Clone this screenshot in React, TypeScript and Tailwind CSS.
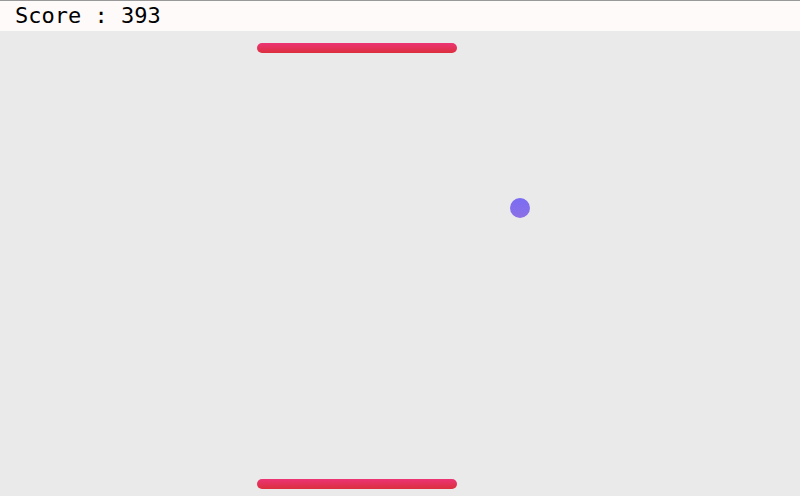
export default function App() {
  return (
    <div className="w-[800px] h-[496px] flex flex-col overflow-hidden bg-[#eaeaea]">
      <div className="h-[31px] shrink-0 border-t border-[#999999] bg-[#fffafa] flex items-center pl-[15px]">
        <span className="text-[22px] leading-none text-black" style={{ fontFamily: '"DejaVu Sans Mono", "Liberation Mono", monospace' }}>
          Score : 393
        </span>
      </div>
      <div className="relative flex-1">
        <div className="absolute left-[257px] top-[12px] w-[200px] h-[10px] rounded-full bg-gradient-to-b from-[#ec3474] to-[#dc2f3c]" />
        <div className="absolute left-[510px] top-[167px] w-[20px] h-[20px] rounded-full bg-gradient-to-b from-[#7a6cf2] to-[#8c70e6]" />
        <div className="absolute left-[257px] top-[448px] w-[200px] h-[10px] rounded-full bg-gradient-to-b from-[#ec3474] to-[#dc2f3c]" />
      </div>
    </div>
  );
}
